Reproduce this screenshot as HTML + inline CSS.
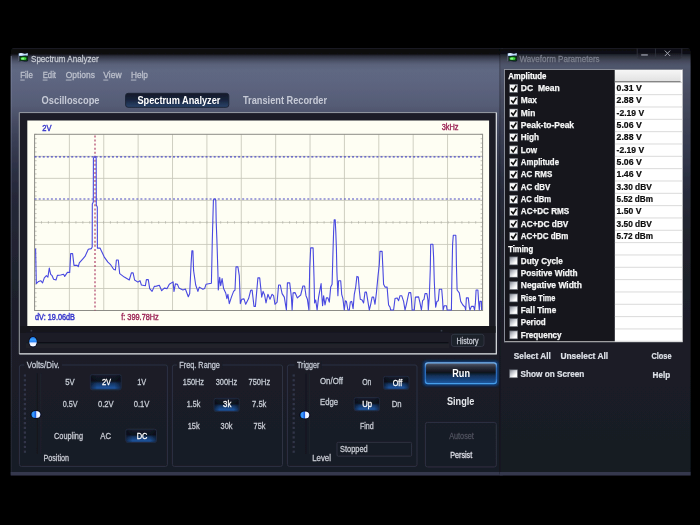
<!DOCTYPE html>
<html lang="en"><head><meta charset="utf-8"><title>Spectrum Analyzer</title>
<style>
html,body{margin:0;padding:0;background:#000;overflow:hidden}
svg{display:block}
text{font-family:'Liberation Sans',sans-serif;white-space:pre}
</style></head><body>
<svg width="700" height="525" viewBox="0 0 700 525">
<defs>
<linearGradient id="gWin" gradientUnits="userSpaceOnUse" x1="0" y1="48" x2="0" y2="475">
<stop offset="0.0000" stop-color="#44465a"/>
<stop offset="0.0021" stop-color="#07080b"/>
<stop offset="0.0141" stop-color="#0b0c12"/>
<stop offset="0.0183" stop-color="#2a2d3a"/>
<stop offset="0.0244" stop-color="#3b4052"/>
<stop offset="0.0304" stop-color="#4c5268"/>
<stop offset="0.0389" stop-color="#5a627a"/>
<stop offset="0.0515" stop-color="#5e6782"/>
<stop offset="0.0796" stop-color="#5d6580"/>
<stop offset="0.1101" stop-color="#59607a"/>
<stop offset="0.1335" stop-color="#555c75"/>
<stop offset="0.1499" stop-color="#4f556d"/>
<stop offset="0.1803" stop-color="#444960"/>
<stop offset="0.2155" stop-color="#3a3f55"/>
<stop offset="0.2857" stop-color="#2c3044"/>
<stop offset="0.3443" stop-color="#252838"/>
<stop offset="0.5902" stop-color="#1c1f2a"/>
<stop offset="1.0000" stop-color="#181b25"/>
</linearGradient>
<linearGradient id="gWin2" gradientUnits="userSpaceOnUse" x1="0" y1="48" x2="0" y2="475">
<stop offset="0.0000" stop-color="#4a4c5a"/>
<stop offset="0.0019" stop-color="#0a0b10"/>
<stop offset="0.0124" stop-color="#0c0d13"/>
<stop offset="0.0159" stop-color="#23252f"/>
<stop offset="0.0218" stop-color="#333642"/>
<stop offset="0.0288" stop-color="#424657"/>
<stop offset="0.0358" stop-color="#4b5065"/>
<stop offset="0.0433" stop-color="#50566c"/>
<stop offset="0.0632" stop-color="#4e546a"/>
<stop offset="0.1148" stop-color="#464b5f"/>
<stop offset="0.1803" stop-color="#3c4155"/>
<stop offset="0.2389" stop-color="#353a4e"/>
<stop offset="0.3091" stop-color="#2a2e40"/>
<stop offset="0.4262" stop-color="#22252f"/>
<stop offset="0.6838" stop-color="#1b1d27"/>
<stop offset="1.0000" stop-color="#181a23"/>
</linearGradient>
<linearGradient id="gSel" x1="0" y1="0" x2="0" y2="1">
<stop offset="0" stop-color="#1d2436"/>
<stop offset="0.12" stop-color="#131827"/>
<stop offset="0.42" stop-color="#0e121d"/>
<stop offset="0.58" stop-color="#153663"/>
<stop offset="0.85" stop-color="#1d5197"/>
<stop offset="1" stop-color="#1a4580"/>
</linearGradient>
<linearGradient id="gSelE" x1="0" y1="0" x2="1" y2="0">
<stop offset="0" stop-color="#080b14" stop-opacity="0.6"/>
<stop offset="0.22" stop-color="#080b14" stop-opacity="0"/>
<stop offset="0.78" stop-color="#080b14" stop-opacity="0"/>
<stop offset="1" stop-color="#080b14" stop-opacity="0.6"/>
</linearGradient>
<linearGradient id="gTab" x1="0" y1="0" x2="0" y2="1">
<stop offset="0" stop-color="#151a29"/>
<stop offset="0.45" stop-color="#18243c"/>
<stop offset="1" stop-color="#2b446c"/>
</linearGradient>
<linearGradient id="gRun" x1="0" y1="0" x2="0" y2="1">
<stop offset="0" stop-color="#566072"/>
<stop offset="0.2" stop-color="#2c313d"/>
<stop offset="0.46" stop-color="#10131c"/>
<stop offset="0.62" stop-color="#123058"/>
<stop offset="1" stop-color="#1d5aa4"/>
</linearGradient>
<linearGradient id="gRunB" x1="0" y1="0" x2="0" y2="1">
<stop offset="0" stop-color="#7ab8f2"/>
<stop offset="0.25" stop-color="#2f6db8"/>
<stop offset="0.75" stop-color="#2b6cbc"/>
<stop offset="1" stop-color="#48a0ec"/>
</linearGradient>
<linearGradient id="gHdr" x1="0" y1="0" x2="0" y2="1">
<stop offset="0" stop-color="#f6f6f6"/>
<stop offset="1" stop-color="#e0e0e0"/>
</linearGradient>
<radialGradient id="gKnob" cx="0.5" cy="0.35" r="0.7">
<stop offset="0" stop-color="#bfe0ff"/>
<stop offset="0.5" stop-color="#2f86f0"/>
<stop offset="1" stop-color="#0a3fb0"/>
</radialGradient>
<linearGradient id="gKnobH" x1="0" y1="0" x2="1" y2="0">
<stop offset="0" stop-color="#1d6fe8"/>
<stop offset="0.2" stop-color="#39a2ff"/>
<stop offset="0.5" stop-color="#1a55e0"/>
<stop offset="0.58" stop-color="#dfe8ff"/>
<stop offset="0.85" stop-color="#ffffff"/>
<stop offset="1" stop-color="#b8ccff"/>
</linearGradient>
<linearGradient id="gKnobV" x1="0" y1="0" x2="0" y2="1">
<stop offset="0" stop-color="#1d6fe8"/>
<stop offset="0.25" stop-color="#39a2ff"/>
<stop offset="0.5" stop-color="#2a80f4"/>
<stop offset="0.62" stop-color="#dfe8ff"/>
<stop offset="0.88" stop-color="#ffffff"/>
<stop offset="1" stop-color="#b8ccff"/>
</linearGradient>
<linearGradient id="gChk" x1="0" y1="0" x2="1" y2="1">
<stop offset="0" stop-color="#7e828c"/>
<stop offset="0.35" stop-color="#c4c7ce"/>
<stop offset="0.7" stop-color="#ffffff"/>
<stop offset="1" stop-color="#ffffff"/>
</linearGradient>
<linearGradient id="gEdge" gradientUnits="userSpaceOnUse" x1="0" y1="56" x2="0" y2="474">
<stop offset="0" stop-color="#8a90aa" stop-opacity="0.5"/>
<stop offset="0.3" stop-color="#6a7088" stop-opacity="0.35"/>
<stop offset="1" stop-color="#3a3e50" stop-opacity="0.3"/>
</linearGradient>
<filter id="soft" x="-5%" y="-5%" width="110%" height="110%"><feGaussianBlur stdDeviation="0.55"/></filter>
<filter id="glow" x="-20%" y="-40%" width="140%" height="180%"><feGaussianBlur stdDeviation="1.3"/></filter>
</defs>
<rect x="0" y="0" width="700" height="525" fill="#000"/>
<g filter="url(#soft)">

<path d="M10.7 475.4 V51.5 Q10.7 48.2 14 48.2 H503 V475.4 Z" fill="url(#gWin)"/>
<rect x="10.7" y="472" width="492" height="3.4" fill="#35384e"/>
<rect x="10.7" y="56" width="1.2" height="418" fill="url(#gEdge)"/>
<g transform="translate(18.1,52.3)"><path d="M0.2 1.2 Q2.6 0 5 0.9 T9.9 0.6 L10 8.6 Q7.5 9.6 5 8.9 T0.4 9.4 Z" fill="#0a1022"/><path d="M0.5 1.3 Q2.6 0.2 5 1.1 T9.7 0.8 L9.7 3.4 Q7 2.8 5 3.4 T0.6 3.6 Z" fill="#a9cdf4"/><path d="M1 1.4 Q2.8 0.6 5 1.4 T9.2 1.1 L9.2 2.1 Q7 1.8 5 2.3 T1 2.5 Z" fill="#eef6ff"/><path d="M1.6 4.3 L9.4 3.9 L9.5 8.1 Q7 8.8 5 8.3 T1.8 8.6 Z" fill="#0b4a12"/><ellipse cx="5.4" cy="6.1" rx="2.9" ry="1.5" fill="#3fd83f"/><ellipse cx="4.6" cy="6.4" rx="1.5" ry="0.9" fill="#8cf58a"/><rect x="0.2" y="3.6" width="1.1" height="5.6" fill="#8a90a0" opacity="0.7"/></g>
<text x="31.0" y="61.6" font-size="9.6" fill="#c8ccd4" stroke="#c8ccd4" stroke-width="0.28" textLength="67.7" lengthAdjust="spacingAndGlyphs">Spectrum Analyzer</text>
<text x="20.3" y="78.4" font-size="9" fill="#bcc0cc" stroke="#bcc0cc" stroke-width="0.28" textLength="12.7" lengthAdjust="spacingAndGlyphs">File</text>
<rect x="20.3" y="79.6" width="4.4" height="0.9" fill="#bcc0cc"/>
<text x="42.7" y="78.4" font-size="9" fill="#bcc0cc" stroke="#bcc0cc" stroke-width="0.28" textLength="13.3" lengthAdjust="spacingAndGlyphs">Edit</text>
<rect x="42.7" y="79.6" width="4.8" height="0.9" fill="#bcc0cc"/>
<text x="65.8" y="78.4" font-size="9" fill="#bcc0cc" stroke="#bcc0cc" stroke-width="0.28" textLength="29.1" lengthAdjust="spacingAndGlyphs">Options</text>
<rect x="65.8" y="79.6" width="5.8" height="0.9" fill="#bcc0cc"/>
<text x="103.3" y="78.4" font-size="9" fill="#bcc0cc" stroke="#bcc0cc" stroke-width="0.28" textLength="18.3" lengthAdjust="spacingAndGlyphs">View</text>
<rect x="103.3" y="79.6" width="5" height="0.9" fill="#bcc0cc"/>
<text x="130.9" y="78.4" font-size="9" fill="#bcc0cc" stroke="#bcc0cc" stroke-width="0.28" textLength="17.1" lengthAdjust="spacingAndGlyphs">Help</text>
<rect x="130.9" y="79.6" width="5.4" height="0.9" fill="#bcc0cc"/>
<rect x="125.6" y="93.3" width="103.2" height="14" rx="2.5" fill="url(#gTab)" stroke="#1a2133" stroke-width="0.9"/>
<text x="41.6" y="104.0" font-size="10.3" fill="#c6cad6" font-weight="bold" textLength="57.9" lengthAdjust="spacingAndGlyphs">Oscilloscope</text>
<text x="137.4" y="104.0" font-size="10.3" fill="#ffffff" font-weight="bold" textLength="83.0" lengthAdjust="spacingAndGlyphs">Spectrum Analyzer</text>
<text x="243.0" y="104.0" font-size="10.3" fill="#c6cad6" font-weight="bold" textLength="84.0" lengthAdjust="spacingAndGlyphs">Transient Recorder</text>
<rect x="19.3" y="112.6" width="477" height="241.3" fill="#1a1c25"/>
<path d="M19.3 353.9 V112.6 H496.3" fill="none" stroke="#9a9ea6" stroke-width="1"/>
<path d="M19.3 353.9 H496.3 V112.6" fill="none" stroke="#e4e6ea" stroke-width="1.2"/>
<rect x="27.3" y="120.5" width="461.8" height="205.5" fill="#fefef3"/>
<path d="M69.38 134.3 V310.5 M103.76 134.3 V310.5 M138.14 134.3 V310.5 M172.52 134.3 V310.5 M206.90 134.3 V310.5 M241.28 134.3 V310.5 M275.66 134.3 V310.5 M310.04 134.3 V310.5 M344.42 134.3 V310.5 M378.80 134.3 V310.5 M413.18 134.3 V310.5 M447.56 134.3 V310.5 M34.6 156.33 H482.6 M34.6 178.35 H482.6 M34.6 200.38 H482.6 M34.6 222.40 H482.6 M34.6 244.43 H482.6 M34.6 266.45 H482.6 M34.6 288.48 H482.6" stroke="#c6c6b8" stroke-width="0.85" fill="none"/>
<path d="M34.60 221.20 v2.4 M41.49 221.20 v2.4 M48.38 221.20 v2.4 M55.28 221.20 v2.4 M62.17 221.20 v2.4 M69.06 221.20 v2.4 M75.95 221.20 v2.4 M82.85 221.20 v2.4 M89.74 221.20 v2.4 M96.63 221.20 v2.4 M103.52 221.20 v2.4 M110.42 221.20 v2.4 M117.31 221.20 v2.4 M124.20 221.20 v2.4 M131.09 221.20 v2.4 M137.98 221.20 v2.4 M144.88 221.20 v2.4 M151.77 221.20 v2.4 M158.66 221.20 v2.4 M165.55 221.20 v2.4 M172.45 221.20 v2.4 M179.34 221.20 v2.4 M186.23 221.20 v2.4 M193.12 221.20 v2.4 M200.02 221.20 v2.4 M206.91 221.20 v2.4 M213.80 221.20 v2.4 M220.69 221.20 v2.4 M227.58 221.20 v2.4 M234.48 221.20 v2.4 M241.37 221.20 v2.4 M248.26 221.20 v2.4 M255.15 221.20 v2.4 M262.05 221.20 v2.4 M268.94 221.20 v2.4 M275.83 221.20 v2.4 M282.72 221.20 v2.4 M289.62 221.20 v2.4 M296.51 221.20 v2.4 M303.40 221.20 v2.4 M310.29 221.20 v2.4 M317.18 221.20 v2.4 M324.08 221.20 v2.4 M330.97 221.20 v2.4 M337.86 221.20 v2.4 M344.75 221.20 v2.4 M351.65 221.20 v2.4 M358.54 221.20 v2.4 M365.43 221.20 v2.4 M372.32 221.20 v2.4 M379.22 221.20 v2.4 M386.11 221.20 v2.4 M393.00 221.20 v2.4 M399.89 221.20 v2.4 M406.78 221.20 v2.4 M413.68 221.20 v2.4 M420.57 221.20 v2.4 M427.46 221.20 v2.4 M434.35 221.20 v2.4 M441.25 221.20 v2.4 M448.14 221.20 v2.4 M455.03 221.20 v2.4 M461.92 221.20 v2.4 M468.82 221.20 v2.4 M475.71 221.20 v2.4 M482.60 221.20 v2.4 M34.6 134.30 h2 M482.6 134.30 h-2 M34.6 138.71 h2 M482.6 138.71 h-2 M34.6 143.11 h2 M482.6 143.11 h-2 M34.6 147.52 h2 M482.6 147.52 h-2 M34.6 151.92 h2 M482.6 151.92 h-2 M34.6 156.33 h2 M482.6 156.33 h-2 M34.6 160.73 h2 M482.6 160.73 h-2 M34.6 165.14 h2 M482.6 165.14 h-2 M34.6 169.54 h2 M482.6 169.54 h-2 M34.6 173.94 h2 M482.6 173.94 h-2 M34.6 178.35 h2 M482.6 178.35 h-2 M34.6 182.75 h2 M482.6 182.75 h-2 M34.6 187.16 h2 M482.6 187.16 h-2 M34.6 191.56 h2 M482.6 191.56 h-2 M34.6 195.97 h2 M482.6 195.97 h-2 M34.6 200.38 h2 M482.6 200.38 h-2 M34.6 204.78 h2 M482.6 204.78 h-2 M34.6 209.19 h2 M482.6 209.19 h-2 M34.6 213.59 h2 M482.6 213.59 h-2 M34.6 218.00 h2 M482.6 218.00 h-2 M34.6 222.40 h2 M482.6 222.40 h-2 M34.6 226.81 h2 M482.6 226.81 h-2 M34.6 231.21 h2 M482.6 231.21 h-2 M34.6 235.62 h2 M482.6 235.62 h-2 M34.6 240.02 h2 M482.6 240.02 h-2 M34.6 244.43 h2 M482.6 244.43 h-2 M34.6 248.83 h2 M482.6 248.83 h-2 M34.6 253.24 h2 M482.6 253.24 h-2 M34.6 257.64 h2 M482.6 257.64 h-2 M34.6 262.04 h2 M482.6 262.04 h-2 M34.6 266.45 h2 M482.6 266.45 h-2 M34.6 270.86 h2 M482.6 270.86 h-2 M34.6 275.26 h2 M482.6 275.26 h-2 M34.6 279.66 h2 M482.6 279.66 h-2 M34.6 284.07 h2 M482.6 284.07 h-2 M34.6 288.48 h2 M482.6 288.48 h-2 M34.6 292.88 h2 M482.6 292.88 h-2 M34.6 297.28 h2 M482.6 297.28 h-2 M34.6 301.69 h2 M482.6 301.69 h-2 M34.6 306.10 h2 M482.6 306.10 h-2 M34.6 310.50 h2 M482.6 310.50 h-2" stroke="#b4b4aa" stroke-width="0.8" fill="none"/>
<rect x="34.6" y="134.3" width="448.0" height="176.2" fill="none" stroke="#8c8c86" stroke-width="1"/>
<path d="M34.6 156.8 H482.6 M34.6 199 H482.6" stroke="#4a4ac4" stroke-width="1.2" stroke-dasharray="2 2.07" fill="none"/>
<path d="M95 135.5 V310.5" stroke="#a8305c" stroke-width="1.1" stroke-dasharray="2 2.05" fill="none"/>
<path d="M35.6 248.6 L36.3 283.6 L38.6 281.4 L40.7 280.7 L42.6 282.9 L44.3 277.9 L46.4 275.7 L47.9 277.1 L49.3 268.1 L50.7 274.3 L52.1 275.7 L53.6 279.3 L56.0 280.0 L57.4 275.4 L60.7 275.0 L63.6 274.3 L64.7 276.4 L67.4 272.4 L69.7 272.4 L70.7 253.6 L72.6 253.6 L74.0 265.4 L77.1 265.4 L78.3 266.7 L79.3 262.9 L83.1 258.6 L85.0 256.4 L88.3 249.3 L91.4 248.6 L92.2 247.0 L92.3 204.0 L93.3 202.0 L93.4 158.5 L94.2 156.9 L95.6 156.9 L96.2 158.5 L96.3 205.0 L97.3 207.0 L97.4 248.1 L100.0 248.1 L104.3 257.1 L107.9 262.1 L110.3 264.3 L113.6 269.3 L115.4 270.0 L116.4 260.0 L118.3 260.0 L119.7 273.6 L124.3 277.1 L129.3 280.0 L131.4 272.9 L133.1 272.9 L134.6 280.0 L137.9 282.1 L140.0 280.7 L141.4 285.0 L145.4 285.7 L146.4 279.6 L148.3 279.6 L149.7 288.6 L152.1 291.4 L154.3 286.4 L156.4 286.1 L159.3 285.3 L161.7 290.7 L164.3 288.1 L167.1 288.6 L169.3 284.3 L173.1 281.9 L174.0 291.4 L175.4 283.9 L177.4 284.3 L178.9 287.9 L182.9 290.0 L185.4 289.0 L188.3 296.7 L189.7 293.6 L191.1 263.6 L191.9 250.7 L192.9 250.7 L193.6 270.7 L195.7 285.0 L197.9 291.4 L199.3 287.1 L202.9 289.3 L204.6 288.6 L206.0 284.3 L211.4 283.3 L211.8 265.0 L212.3 240.0 L212.8 222.0 L213.4 200.5 L213.9 199.0 L215.3 199.0 L215.8 200.5 L216.2 222.0 L216.9 240.0 L217.4 256.0 L217.9 272.0 L218.3 290.0 L219.7 277.4 L220.7 285.7 L222.1 278.6 L223.6 288.6 L225.7 292.9 L226.9 298.6 L227.9 294.3 L229.3 303.6 L231.4 297.1 L233.6 291.4 L235.0 290.0 L236.0 266.9 L237.9 266.9 L239.3 275.7 L240.3 303.6 L241.7 299.3 L244.0 298.9 L245.7 304.3 L248.6 298.6 L250.7 290.3 L252.1 290.0 L254.0 306.4 L255.4 306.4 L257.9 277.9 L259.7 277.9 L261.7 297.1 L263.1 291.4 L264.6 295.0 L266.0 302.9 L267.9 294.3 L270.0 299.3 L272.1 294.3 L273.6 295.7 L275.0 304.3 L277.1 302.1 L278.6 285.0 L280.3 285.0 L282.1 293.6 L284.3 297.1 L286.4 310.0 L287.4 282.9 L289.7 282.9 L291.4 297.1 L292.1 310.0 L293.1 292.9 L295.0 292.6 L297.4 297.9 L300.7 295.0 L302.9 286.0 L304.6 286.0 L306.0 295.7 L307.4 299.3 L308.9 310.0 L309.7 268.6 L310.7 247.9 L313.1 247.9 L314.0 277.1 L314.6 302.9 L315.7 300.0 L317.1 310.0 L318.6 297.1 L321.1 283.6 L321.7 294.3 L322.6 305.7 L323.6 295.7 L325.0 305.0 L326.4 297.9 L327.9 297.9 L329.3 302.1 L330.7 287.1 L332.1 284.3 L332.9 254.3 L333.6 232.0 L334.2 219.9 L335.2 219.9 L335.8 232.0 L336.4 248.6 L336.9 271.4 L337.9 295.7 L338.6 280.7 L340.7 280.7 L341.7 294.3 L342.9 298.6 L344.3 310.0 L345.4 300.7 L346.4 301.4 L347.9 310.0 L349.3 310.0 L350.3 302.1 L351.7 301.4 L353.1 308.6 L354.3 294.3 L355.7 287.1 L356.9 276.4 L358.3 277.1 L359.3 290.0 L360.3 299.3 L362.1 300.0 L363.6 302.9 L365.0 292.1 L366.4 292.1 L367.9 301.4 L369.3 310.0 L370.7 304.3 L372.1 297.1 L373.6 297.1 L375.0 304.3 L376.4 292.9 L377.9 277.1 L379.3 264.3 L380.0 251.4 L382.1 251.4 L382.9 268.6 L383.6 284.3 L385.0 287.1 L387.1 287.1 L387.9 297.1 L388.6 305.0 L390.0 307.1 L390.7 310.0 L393.6 310.0 L395.0 298.6 L397.1 297.9 L398.6 300.7 L400.0 295.7 L401.7 295.7 L403.6 301.4 L405.0 310.0 L406.4 304.3 L407.9 297.1 L408.9 292.6 L410.7 292.6 L411.4 298.6 L412.1 310.0 L414.3 310.0 L415.4 297.1 L418.6 296.9 L420.0 302.9 L421.4 310.0 L422.6 300.7 L424.0 299.3 L425.0 293.6 L426.9 293.6 L427.9 300.0 L428.3 310.0 L429.3 297.1 L430.3 268.6 L430.7 244.3 L432.9 244.3 L433.6 257.1 L434.3 281.4 L435.0 297.1 L435.7 307.1 L436.9 301.4 L438.3 300.7 L439.3 289.3 L441.7 289.3 L442.6 300.0 L443.1 310.0 L444.3 305.7 L446.4 305.7 L447.1 310.0 L451.4 310.0 L451.9 277.1 L452.6 244.3 L453.3 235.2 L455.8 235.2 L456.1 244.0 L456.4 264.3 L457.1 290.0 L459.3 292.9 L460.7 301.4 L462.9 305.0 L465.0 307.1 L465.7 310.0 L466.4 297.9 L468.3 297.9 L469.3 307.1 L470.0 310.0 L471.4 306.4 L473.6 306.4 L474.6 310.0 L475.4 302.9 L476.1 290.0 L477.9 290.0 L478.6 301.4 L479.3 310.0 L480.0 301.4 L481.4 301.4 L481.6 310.0" fill="none" stroke="#4848e0" stroke-width="1.1" stroke-linejoin="round"/>
<text x="42.3" y="130.6" font-size="9" fill="#3636cc" stroke="#3636cc" stroke-width="0.45" textLength="9.2" lengthAdjust="spacingAndGlyphs">2V</text>
<text x="441.7" y="130.4" font-size="9" fill="#9c2456" stroke="#9c2456" stroke-width="0.4" textLength="16.9" lengthAdjust="spacingAndGlyphs">3kHz</text>
<text x="35.0" y="320.1" font-size="9" fill="#3636cc" stroke="#3636cc" stroke-width="0.45" textLength="40.0" lengthAdjust="spacingAndGlyphs">dV: 19.06dB</text>
<text x="121.2" y="320.1" font-size="9" fill="#9c2456" stroke="#9c2456" stroke-width="0.4" textLength="37.6" lengthAdjust="spacingAndGlyphs">f: 399.78Hz</text>
<rect x="20" y="326.2" width="475.6" height="6.6" fill="#14161d"/>
<rect x="26" y="332.8" width="423" height="9.4" fill="#1d1f28"/>
<rect x="26" y="343.2" width="423" height="5.2" fill="#20222c"/>
<path d="M30 342.7 H448.5" stroke="#0a0b10" stroke-width="1.1"/>
<circle cx="31.4" cy="330.7" r="0.9" fill="#3a3e4c"/><circle cx="441.5" cy="330.7" r="0.9" fill="#3a3e4c"/>
<ellipse cx="33" cy="341.8" rx="4.6" ry="5.6" fill="#070a1c"/>
<ellipse cx="33" cy="341.8" rx="3.8" ry="4.8" fill="url(#gKnobV)"/>
<rect x="451.4" y="334.3" width="32.6" height="12.2" rx="2.5" fill="#1d202a" stroke="#343846" stroke-width="0.9"/>
<text x="456.4" y="343.5" font-size="9" fill="#c8ccd4" stroke="#c8ccd4" stroke-width="0.28" textLength="22.2" lengthAdjust="spacingAndGlyphs">History</text>
<rect x="19.4" y="365.0" width="148.0" height="101.4" rx="2" fill="none" stroke="#2e3242" stroke-width="1"/>
<rect x="24.3" y="361.0" width="37.7" height="8" fill="#1a1d28"/>
<text x="26.8" y="367.9" font-size="9" fill="#c4c8d2" stroke="#c4c8d2" stroke-width="0.28" textLength="32.7" lengthAdjust="spacingAndGlyphs">Volts/Div.</text>
<rect x="172.4" y="365.0" width="110.1" height="101.4" rx="2" fill="none" stroke="#2e3242" stroke-width="1"/>
<rect x="176.8" y="361.0" width="45.6" height="8" fill="#1a1d28"/>
<text x="179.3" y="367.9" font-size="9" fill="#c4c8d2" stroke="#c4c8d2" stroke-width="0.28" textLength="40.6" lengthAdjust="spacingAndGlyphs">Freq. Range</text>
<rect x="287.4" y="365.0" width="129.6" height="101.4" rx="2" fill="none" stroke="#2e3242" stroke-width="1"/>
<rect x="294.5" y="361.0" width="27.4" height="8" fill="#1a1d28"/>
<text x="297.0" y="367.9" font-size="9" fill="#c4c8d2" stroke="#c4c8d2" stroke-width="0.28" textLength="22.4" lengthAdjust="spacingAndGlyphs">Trigger</text>
<rect x="425.4" y="422.4" width="70.9" height="44.5" rx="2" fill="none" stroke="#2e3242" stroke-width="1"/>
<rect x="23.8" y="374.4" width="2.2" height="2.2" fill="#32364a"/><rect x="23.8" y="379.2" width="2.2" height="2.2" fill="#32364a"/><rect x="23.8" y="383.9" width="2.2" height="2.2" fill="#32364a"/><rect x="23.8" y="388.7" width="2.2" height="2.2" fill="#32364a"/><rect x="23.8" y="393.4" width="2.2" height="2.2" fill="#32364a"/><rect x="23.8" y="398.2" width="2.2" height="2.2" fill="#32364a"/><rect x="23.8" y="403.0" width="2.2" height="2.2" fill="#32364a"/><rect x="23.8" y="407.7" width="2.2" height="2.2" fill="#32364a"/><rect x="23.8" y="412.5" width="2.2" height="2.2" fill="#32364a"/><rect x="23.8" y="417.2" width="2.2" height="2.2" fill="#32364a"/><rect x="23.8" y="422.0" width="2.2" height="2.2" fill="#32364a"/><rect x="23.8" y="426.8" width="2.2" height="2.2" fill="#32364a"/><rect x="23.8" y="431.5" width="2.2" height="2.2" fill="#32364a"/><rect x="23.8" y="436.3" width="2.2" height="2.2" fill="#32364a"/><rect x="23.8" y="441.0" width="2.2" height="2.2" fill="#32364a"/><rect x="23.8" y="445.8" width="2.2" height="2.2" fill="#32364a"/><rect x="23.8" y="450.6" width="2.2" height="2.2" fill="#32364a"/>
<path d="M37.3 373.5 V454" stroke="#12141c" stroke-width="1.1"/>
<path d="M40.9 373.5 V454" stroke="#20232e" stroke-width="0.8"/>
<ellipse cx="35.9" cy="414.5" rx="5.6" ry="4.3" fill="#070a1c"/>
<ellipse cx="35.9" cy="414.5" rx="4.5" ry="3.5" fill="url(#gKnobH)"/>
<rect x="90.3" y="374.6" width="30.9" height="15.2" rx="2" fill="url(#gSel)"/>
<rect x="90.3" y="374.6" width="30.9" height="15.2" rx="2" fill="url(#gSelE)" stroke="#222b40" stroke-width="0.9"/>
<text x="65.2" y="385.4" font-size="9" fill="#c8ccd4" stroke="#c8ccd4" stroke-width="0.28" textLength="9.4" lengthAdjust="spacingAndGlyphs">5V</text>
<text x="101.9" y="385.4" font-size="9" fill="#ffffff" stroke="#ffffff" stroke-width="0.28" textLength="9.2" lengthAdjust="spacingAndGlyphs">2V</text>
<text x="137.2" y="385.4" font-size="9" fill="#c8ccd4" stroke="#c8ccd4" stroke-width="0.28" textLength="9.0" lengthAdjust="spacingAndGlyphs">1V</text>
<text x="62.7" y="407.4" font-size="9" fill="#c8ccd4" stroke="#c8ccd4" stroke-width="0.28" textLength="14.9" lengthAdjust="spacingAndGlyphs">0.5V</text>
<text x="98.0" y="407.4" font-size="9" fill="#c8ccd4" stroke="#c8ccd4" stroke-width="0.28" textLength="15.7" lengthAdjust="spacingAndGlyphs">0.2V</text>
<text x="133.7" y="407.4" font-size="9" fill="#c8ccd4" stroke="#c8ccd4" stroke-width="0.28" textLength="15.7" lengthAdjust="spacingAndGlyphs">0.1V</text>
<rect x="125.8" y="429.2" width="30.7" height="13.2" rx="2" fill="url(#gSel)"/>
<rect x="125.8" y="429.2" width="30.7" height="13.2" rx="2" fill="url(#gSelE)" stroke="#222b40" stroke-width="0.9"/>
<text x="54.0" y="439.4" font-size="9" fill="#c8ccd4" stroke="#c8ccd4" stroke-width="0.28" textLength="29.0" lengthAdjust="spacingAndGlyphs">Coupling</text>
<text x="100.3" y="439.2" font-size="9" fill="#c8ccd4" stroke="#c8ccd4" stroke-width="0.28" textLength="10.7" lengthAdjust="spacingAndGlyphs">AC</text>
<text x="136.7" y="439.2" font-size="9" fill="#ffffff" stroke="#ffffff" stroke-width="0.28" textLength="10.7" lengthAdjust="spacingAndGlyphs">DC</text>
<text x="43.4" y="460.9" font-size="9" fill="#c8ccd4" stroke="#c8ccd4" stroke-width="0.28" textLength="25.6" lengthAdjust="spacingAndGlyphs">Position</text>
<rect x="214" y="398.3" width="25.2" height="13.1" rx="2" fill="url(#gSel)"/>
<rect x="214" y="398.3" width="25.2" height="13.1" rx="2" fill="url(#gSelE)" stroke="#222b40" stroke-width="0.9"/>
<text x="182.8" y="385.4" font-size="9" fill="#c8ccd4" stroke="#c8ccd4" stroke-width="0.28" textLength="21.2" lengthAdjust="spacingAndGlyphs">150Hz</text>
<text x="215.7" y="385.4" font-size="9" fill="#c8ccd4" stroke="#c8ccd4" stroke-width="0.28" textLength="21.5" lengthAdjust="spacingAndGlyphs">300Hz</text>
<text x="248.6" y="385.4" font-size="9" fill="#c8ccd4" stroke="#c8ccd4" stroke-width="0.28" textLength="21.5" lengthAdjust="spacingAndGlyphs">750Hz</text>
<text x="186.7" y="407.4" font-size="9" fill="#c8ccd4" stroke="#c8ccd4" stroke-width="0.28" textLength="13.6" lengthAdjust="spacingAndGlyphs">1.5k</text>
<text x="223.1" y="407.4" font-size="9" fill="#ffffff" stroke="#ffffff" stroke-width="0.28" textLength="8.2" lengthAdjust="spacingAndGlyphs">3k</text>
<text x="252.1" y="407.4" font-size="9" fill="#c8ccd4" stroke="#c8ccd4" stroke-width="0.28" textLength="14.3" lengthAdjust="spacingAndGlyphs">7.5k</text>
<text x="187.7" y="429.1" font-size="9" fill="#c8ccd4" stroke="#c8ccd4" stroke-width="0.28" textLength="11.9" lengthAdjust="spacingAndGlyphs">15k</text>
<text x="220.6" y="429.1" font-size="9" fill="#c8ccd4" stroke="#c8ccd4" stroke-width="0.28" textLength="11.9" lengthAdjust="spacingAndGlyphs">30k</text>
<text x="253.6" y="429.1" font-size="9" fill="#c8ccd4" stroke="#c8ccd4" stroke-width="0.28" textLength="11.8" lengthAdjust="spacingAndGlyphs">75k</text>
<rect x="292.6" y="374.4" width="2.2" height="2.2" fill="#32364a"/><rect x="292.6" y="379.2" width="2.2" height="2.2" fill="#32364a"/><rect x="292.6" y="383.9" width="2.2" height="2.2" fill="#32364a"/><rect x="292.6" y="388.7" width="2.2" height="2.2" fill="#32364a"/><rect x="292.6" y="393.4" width="2.2" height="2.2" fill="#32364a"/><rect x="292.6" y="398.2" width="2.2" height="2.2" fill="#32364a"/><rect x="292.6" y="403.0" width="2.2" height="2.2" fill="#32364a"/><rect x="292.6" y="407.7" width="2.2" height="2.2" fill="#32364a"/><rect x="292.6" y="412.5" width="2.2" height="2.2" fill="#32364a"/><rect x="292.6" y="417.2" width="2.2" height="2.2" fill="#32364a"/><rect x="292.6" y="422.0" width="2.2" height="2.2" fill="#32364a"/><rect x="292.6" y="426.8" width="2.2" height="2.2" fill="#32364a"/><rect x="292.6" y="431.5" width="2.2" height="2.2" fill="#32364a"/><rect x="292.6" y="436.3" width="2.2" height="2.2" fill="#32364a"/><rect x="292.6" y="441.0" width="2.2" height="2.2" fill="#32364a"/><rect x="292.6" y="445.8" width="2.2" height="2.2" fill="#32364a"/><rect x="292.6" y="450.6" width="2.2" height="2.2" fill="#32364a"/>
<path d="M306 373.5 V454" stroke="#12141c" stroke-width="1.1"/>
<path d="M309.6 373.5 V454" stroke="#20232e" stroke-width="0.8"/>
<ellipse cx="304.8" cy="414.9" rx="5.6" ry="4.3" fill="#070a1c"/>
<ellipse cx="304.8" cy="414.9" rx="4.5" ry="3.5" fill="url(#gKnobH)"/>
<rect x="383.5" y="376.3" width="25.5" height="13.1" rx="2" fill="url(#gSel)"/>
<rect x="383.5" y="376.3" width="25.5" height="13.1" rx="2" fill="url(#gSelE)" stroke="#222b40" stroke-width="0.9"/>
<rect x="354.2" y="397.6" width="25.4" height="13.2" rx="2" fill="url(#gSel)"/>
<rect x="354.2" y="397.6" width="25.4" height="13.2" rx="2" fill="url(#gSelE)" stroke="#222b40" stroke-width="0.9"/>
<text x="320.0" y="383.8" font-size="9" fill="#c8ccd4" stroke="#c8ccd4" stroke-width="0.28" textLength="23.0" lengthAdjust="spacingAndGlyphs">On/Off</text>
<text x="362.2" y="385.2" font-size="9" fill="#c8ccd4" stroke="#c8ccd4" stroke-width="0.28" textLength="9.2" lengthAdjust="spacingAndGlyphs">On</text>
<text x="392.7" y="385.7" font-size="9" fill="#ffffff" stroke="#ffffff" stroke-width="0.28" textLength="9.5" lengthAdjust="spacingAndGlyphs">Off</text>
<text x="320.0" y="405.0" font-size="9" fill="#c8ccd4" stroke="#c8ccd4" stroke-width="0.28" textLength="18.0" lengthAdjust="spacingAndGlyphs">Edge</text>
<text x="362.2" y="407.3" font-size="9" fill="#ffffff" stroke="#ffffff" stroke-width="0.28" textLength="9.8" lengthAdjust="spacingAndGlyphs">Up</text>
<text x="391.7" y="406.9" font-size="9" fill="#c8ccd4" stroke="#c8ccd4" stroke-width="0.28" textLength="9.9" lengthAdjust="spacingAndGlyphs">Dn</text>
<text x="359.9" y="429.4" font-size="9" fill="#c8ccd4" stroke="#c8ccd4" stroke-width="0.28" textLength="13.8" lengthAdjust="spacingAndGlyphs">Find</text>
<text x="312.2" y="461.0" font-size="9" fill="#c8ccd4" stroke="#c8ccd4" stroke-width="0.28" textLength="18.8" lengthAdjust="spacingAndGlyphs">Level</text>
<rect x="337" y="442.3" width="74.6" height="13.9" rx="1.2" fill="#191c25" stroke="#323645" stroke-width="0.9"/>
<text x="340.1" y="452.2" font-size="9" fill="#c8ccd4" stroke="#c8ccd4" stroke-width="0.28" textLength="27.6" lengthAdjust="spacingAndGlyphs">Stopped</text>
<rect x="423" y="360.8" width="75.8" height="25.2" rx="4" fill="#114488" opacity="0.85" filter="url(#glow)"/>
<rect x="425.4" y="362.9" width="71" height="20.8" rx="2.6" fill="url(#gRun)" stroke="url(#gRunB)" stroke-width="1.3"/>
<text x="452.3" y="377.0" font-size="10.3" fill="#ffffff" font-weight="bold" textLength="17.7" lengthAdjust="spacingAndGlyphs">Run</text>
<text x="446.9" y="404.7" font-size="10.3" fill="#e4e6ea" font-weight="bold" textLength="27.5" lengthAdjust="spacingAndGlyphs">Single</text>
<text x="449.2" y="439.2" font-size="9" fill="#4e525e" stroke="#4e525e" stroke-width="0.28" textLength="24.7" lengthAdjust="spacingAndGlyphs">Autoset</text>
<text x="450.2" y="458.2" font-size="9" fill="#dde0e8" stroke="#dde0e8" stroke-width="0.28" textLength="22.0" lengthAdjust="spacingAndGlyphs">Persist</text>
<path d="M499.8 475.4 V51.5 Q499.8 48.2 503 48.2 H687.3 Q690.6 48.2 690.6 51.5 V475.4 Z" fill="url(#gWin2)"/>
<rect x="499.3" y="49" width="1" height="425" fill="#000" opacity="0.28"/>
<rect x="499.8" y="472" width="190.8" height="3.4" fill="#35384e"/>
<g transform="translate(507.1,52.3)"><path d="M0.2 1.2 Q2.6 0 5 0.9 T9.9 0.6 L10 8.6 Q7.5 9.6 5 8.9 T0.4 9.4 Z" fill="#0a1022"/><path d="M0.5 1.3 Q2.6 0.2 5 1.1 T9.7 0.8 L9.7 3.4 Q7 2.8 5 3.4 T0.6 3.6 Z" fill="#a9cdf4"/><path d="M1 1.4 Q2.8 0.6 5 1.4 T9.2 1.1 L9.2 2.1 Q7 1.8 5 2.3 T1 2.5 Z" fill="#eef6ff"/><path d="M1.6 4.3 L9.4 3.9 L9.5 8.1 Q7 8.8 5 8.3 T1.8 8.6 Z" fill="#0b4a12"/><ellipse cx="5.4" cy="6.1" rx="2.9" ry="1.5" fill="#3fd83f"/><ellipse cx="4.6" cy="6.4" rx="1.5" ry="0.9" fill="#8cf58a"/><rect x="0.2" y="3.6" width="1.1" height="5.6" fill="#8a90a0" opacity="0.7"/></g>
<text x="519.6" y="61.6" font-size="9.6" fill="#7c808e" stroke="#7c808e" stroke-width="0.28" textLength="80.0" lengthAdjust="spacingAndGlyphs">Waveform Parameters</text>
<path d="M637.2 48.6 V56 Q637.2 58.9 640.2 58.9 H678.8 Q681.8 58.9 681.8 56 V48.6" fill="#1d1f27" fill-opacity="0.2" stroke="#343742" stroke-width="0.8"/>
<path d="M655.5 48.6 V58.9" stroke="#30333e" stroke-width="0.8"/>
<rect x="641.2" y="54.3" width="6.6" height="1.3" fill="#989ca8"/>
<path d="M664.8 50.6 L670.2 56 M670.2 50.6 L664.8 56" stroke="#a4a8b4" stroke-width="1"/>
<rect x="504.1" y="69.1" width="178.7" height="273.1" fill="#dadada"/>
<path d="M504.55 342.2 V69.55 H682.8" stroke="#7c808c" stroke-width="0.9" fill="none"/>
<rect x="505" y="70.0" width="109.9" height="271.3" fill="#17191f"/>
<rect x="614.9" y="70.0" width="67.1" height="271.3" fill="#ffffff"/>
<rect x="614.9" y="70.0" width="67.1" height="12.3" fill="url(#gHdr)"/>
<rect x="614.9" y="81.1" width="65.9" height="1.4" fill="#6c6c6c"/>
<rect x="680.7" y="70.0" width="1.3" height="12.3" fill="#ffffff"/>
<path d="M614.9 82.33 H682 M614.9 94.66 H682 M614.9 106.99 H682 M614.9 119.32 H682 M614.9 131.65 H682 M614.9 143.98 H682 M614.9 156.31 H682 M614.9 168.64 H682 M614.9 180.97 H682 M614.9 193.30 H682 M614.9 205.63 H682 M614.9 217.96 H682 M614.9 230.29 H682 M614.9 242.62 H682 M614.9 254.95 H682 M614.9 267.28 H682 M614.9 279.61 H682 M614.9 291.94 H682 M614.9 304.27 H682 M614.9 316.60 H682 M614.9 328.93 H682 M614.9 341.26 H682" stroke="#d6d6d6" stroke-width="0.9" fill="none"/>
<text x="508.2" y="79.2" font-size="8.7" fill="#ffffff" font-weight="bold" stroke="#ffffff" stroke-width="0.25" textLength="38.3" lengthAdjust="spacingAndGlyphs">Amplitude</text>
<rect x="509.7" y="84.3" width="8" height="8" fill="#f8f8f8" stroke="#6a6e78" stroke-width="0.6"/>
<path d="M511.2 87.9 l2.0 2.5 l3.2 -4.9" stroke="#0c0c0c" stroke-width="1.6" fill="none"/>
<text x="520.8" y="91.1" font-size="8.7" fill="#f6f6f6" font-weight="bold" stroke="#f6f6f6" stroke-width="0.25" textLength="39.0" lengthAdjust="spacingAndGlyphs">DC  Mean</text>
<text x="616.6" y="91.1" font-size="8.7" fill="#0c0c0c" font-weight="bold" stroke="#0c0c0c" stroke-width="0.2" textLength="25.2" lengthAdjust="spacingAndGlyphs">0.31 V</text>
<rect x="509.7" y="96.6" width="8" height="8" fill="#f8f8f8" stroke="#6a6e78" stroke-width="0.6"/>
<path d="M511.2 100.2 l2.0 2.5 l3.2 -4.9" stroke="#0c0c0c" stroke-width="1.6" fill="none"/>
<text x="520.8" y="103.4" font-size="8.7" fill="#f6f6f6" font-weight="bold" stroke="#f6f6f6" stroke-width="0.25" textLength="16.2" lengthAdjust="spacingAndGlyphs">Max</text>
<text x="616.6" y="103.4" font-size="8.7" fill="#0c0c0c" font-weight="bold" stroke="#0c0c0c" stroke-width="0.2" textLength="25.2" lengthAdjust="spacingAndGlyphs">2.88 V</text>
<rect x="509.7" y="109.0" width="8" height="8" fill="#f8f8f8" stroke="#6a6e78" stroke-width="0.6"/>
<path d="M511.2 112.6 l2.0 2.5 l3.2 -4.9" stroke="#0c0c0c" stroke-width="1.6" fill="none"/>
<text x="520.8" y="115.8" font-size="8.7" fill="#f6f6f6" font-weight="bold" stroke="#f6f6f6" stroke-width="0.25" textLength="14.5" lengthAdjust="spacingAndGlyphs">Min</text>
<text x="616.6" y="115.8" font-size="8.7" fill="#0c0c0c" font-weight="bold" stroke="#0c0c0c" stroke-width="0.2" textLength="27.5" lengthAdjust="spacingAndGlyphs">-2.19 V</text>
<rect x="509.7" y="121.3" width="8" height="8" fill="#f8f8f8" stroke="#6a6e78" stroke-width="0.6"/>
<path d="M511.2 124.9 l2.0 2.5 l3.2 -4.9" stroke="#0c0c0c" stroke-width="1.6" fill="none"/>
<text x="520.8" y="128.1" font-size="8.7" fill="#f6f6f6" font-weight="bold" stroke="#f6f6f6" stroke-width="0.25" textLength="53.3" lengthAdjust="spacingAndGlyphs">Peak-to-Peak</text>
<text x="616.6" y="128.1" font-size="8.7" fill="#0c0c0c" font-weight="bold" stroke="#0c0c0c" stroke-width="0.2" textLength="25.2" lengthAdjust="spacingAndGlyphs">5.06 V</text>
<rect x="509.7" y="133.6" width="8" height="8" fill="#f8f8f8" stroke="#6a6e78" stroke-width="0.6"/>
<path d="M511.2 137.2 l2.0 2.5 l3.2 -4.9" stroke="#0c0c0c" stroke-width="1.6" fill="none"/>
<text x="520.8" y="140.4" font-size="8.7" fill="#f6f6f6" font-weight="bold" stroke="#f6f6f6" stroke-width="0.25" textLength="18.2" lengthAdjust="spacingAndGlyphs">High</text>
<text x="616.6" y="140.4" font-size="8.7" fill="#0c0c0c" font-weight="bold" stroke="#0c0c0c" stroke-width="0.2" textLength="25.2" lengthAdjust="spacingAndGlyphs">2.88 V</text>
<rect x="509.7" y="145.9" width="8" height="8" fill="#f8f8f8" stroke="#6a6e78" stroke-width="0.6"/>
<path d="M511.2 149.5 l2.0 2.5 l3.2 -4.9" stroke="#0c0c0c" stroke-width="1.6" fill="none"/>
<text x="520.8" y="152.8" font-size="8.7" fill="#f6f6f6" font-weight="bold" stroke="#f6f6f6" stroke-width="0.25" textLength="16.2" lengthAdjust="spacingAndGlyphs">Low</text>
<text x="616.6" y="152.8" font-size="8.7" fill="#0c0c0c" font-weight="bold" stroke="#0c0c0c" stroke-width="0.2" textLength="27.5" lengthAdjust="spacingAndGlyphs">-2.19 V</text>
<rect x="509.7" y="158.3" width="8" height="8" fill="#f8f8f8" stroke="#6a6e78" stroke-width="0.6"/>
<path d="M511.2 161.9 l2.0 2.5 l3.2 -4.9" stroke="#0c0c0c" stroke-width="1.6" fill="none"/>
<text x="520.8" y="165.1" font-size="8.7" fill="#f6f6f6" font-weight="bold" stroke="#f6f6f6" stroke-width="0.25" textLength="38.2" lengthAdjust="spacingAndGlyphs">Amplitude</text>
<text x="616.6" y="165.1" font-size="8.7" fill="#0c0c0c" font-weight="bold" stroke="#0c0c0c" stroke-width="0.2" textLength="25.2" lengthAdjust="spacingAndGlyphs">5.06 V</text>
<rect x="509.7" y="170.6" width="8" height="8" fill="#f8f8f8" stroke="#6a6e78" stroke-width="0.6"/>
<path d="M511.2 174.2 l2.0 2.5 l3.2 -4.9" stroke="#0c0c0c" stroke-width="1.6" fill="none"/>
<text x="520.8" y="177.4" font-size="8.7" fill="#f6f6f6" font-weight="bold" stroke="#f6f6f6" stroke-width="0.25" textLength="31.5" lengthAdjust="spacingAndGlyphs">AC RMS</text>
<text x="616.6" y="177.4" font-size="8.7" fill="#0c0c0c" font-weight="bold" stroke="#0c0c0c" stroke-width="0.2" textLength="25.2" lengthAdjust="spacingAndGlyphs">1.46 V</text>
<rect x="509.7" y="182.9" width="8" height="8" fill="#f8f8f8" stroke="#6a6e78" stroke-width="0.6"/>
<path d="M511.2 186.5 l2.0 2.5 l3.2 -4.9" stroke="#0c0c0c" stroke-width="1.6" fill="none"/>
<text x="520.8" y="189.7" font-size="8.7" fill="#f6f6f6" font-weight="bold" stroke="#f6f6f6" stroke-width="0.25" textLength="29.5" lengthAdjust="spacingAndGlyphs">AC dBV</text>
<text x="616.6" y="189.7" font-size="8.7" fill="#0c0c0c" font-weight="bold" stroke="#0c0c0c" stroke-width="0.2" textLength="35.2" lengthAdjust="spacingAndGlyphs">3.30 dBV</text>
<rect x="509.7" y="195.3" width="8" height="8" fill="#f8f8f8" stroke="#6a6e78" stroke-width="0.6"/>
<path d="M511.2 198.9 l2.0 2.5 l3.2 -4.9" stroke="#0c0c0c" stroke-width="1.6" fill="none"/>
<text x="520.8" y="202.1" font-size="8.7" fill="#f6f6f6" font-weight="bold" stroke="#f6f6f6" stroke-width="0.25" textLength="30.4" lengthAdjust="spacingAndGlyphs">AC dBm</text>
<text x="616.6" y="202.1" font-size="8.7" fill="#0c0c0c" font-weight="bold" stroke="#0c0c0c" stroke-width="0.2" textLength="36.4" lengthAdjust="spacingAndGlyphs">5.52 dBm</text>
<rect x="509.7" y="207.6" width="8" height="8" fill="#f8f8f8" stroke="#6a6e78" stroke-width="0.6"/>
<path d="M511.2 211.2 l2.0 2.5 l3.2 -4.9" stroke="#0c0c0c" stroke-width="1.6" fill="none"/>
<text x="520.8" y="214.4" font-size="8.7" fill="#f6f6f6" font-weight="bold" stroke="#f6f6f6" stroke-width="0.25" textLength="48.4" lengthAdjust="spacingAndGlyphs">AC+DC RMS</text>
<text x="616.6" y="214.4" font-size="8.7" fill="#0c0c0c" font-weight="bold" stroke="#0c0c0c" stroke-width="0.2" textLength="24.8" lengthAdjust="spacingAndGlyphs">1.50 V</text>
<rect x="509.7" y="219.9" width="8" height="8" fill="#f8f8f8" stroke="#6a6e78" stroke-width="0.6"/>
<path d="M511.2 223.5 l2.0 2.5 l3.2 -4.9" stroke="#0c0c0c" stroke-width="1.6" fill="none"/>
<text x="520.8" y="226.7" font-size="8.7" fill="#f6f6f6" font-weight="bold" stroke="#f6f6f6" stroke-width="0.25" textLength="47.6" lengthAdjust="spacingAndGlyphs">AC+DC dBV</text>
<text x="616.6" y="226.7" font-size="8.7" fill="#0c0c0c" font-weight="bold" stroke="#0c0c0c" stroke-width="0.2" textLength="35.2" lengthAdjust="spacingAndGlyphs">3.50 dBV</text>
<rect x="509.7" y="232.3" width="8" height="8" fill="#f8f8f8" stroke="#6a6e78" stroke-width="0.6"/>
<path d="M511.2 235.9 l2.0 2.5 l3.2 -4.9" stroke="#0c0c0c" stroke-width="1.6" fill="none"/>
<text x="520.8" y="239.1" font-size="8.7" fill="#f6f6f6" font-weight="bold" stroke="#f6f6f6" stroke-width="0.25" textLength="47.6" lengthAdjust="spacingAndGlyphs">AC+DC dBm</text>
<text x="616.6" y="239.1" font-size="8.7" fill="#0c0c0c" font-weight="bold" stroke="#0c0c0c" stroke-width="0.2" textLength="36.4" lengthAdjust="spacingAndGlyphs">5.72 dBm</text>
<text x="508.2" y="251.8" font-size="8.7" fill="#ffffff" font-weight="bold" stroke="#ffffff" stroke-width="0.25" textLength="24.9" lengthAdjust="spacingAndGlyphs">Timing</text>
<rect x="509.7" y="256.9" width="8" height="8" fill="url(#gChk)" stroke="#5a5e68" stroke-width="0.6"/>
<text x="520.8" y="263.7" font-size="8.7" fill="#f6f6f6" font-weight="bold" stroke="#f6f6f6" stroke-width="0.25" textLength="42.1" lengthAdjust="spacingAndGlyphs">Duty Cycle</text>
<rect x="509.7" y="269.2" width="8" height="8" fill="url(#gChk)" stroke="#5a5e68" stroke-width="0.6"/>
<text x="520.8" y="276.1" font-size="8.7" fill="#f6f6f6" font-weight="bold" stroke="#f6f6f6" stroke-width="0.25" textLength="56.8" lengthAdjust="spacingAndGlyphs">Positive Width</text>
<rect x="509.7" y="281.6" width="8" height="8" fill="url(#gChk)" stroke="#5a5e68" stroke-width="0.6"/>
<text x="520.8" y="288.4" font-size="8.7" fill="#f6f6f6" font-weight="bold" stroke="#f6f6f6" stroke-width="0.25" textLength="61.0" lengthAdjust="spacingAndGlyphs">Negative Width</text>
<rect x="509.7" y="293.9" width="8" height="8" fill="url(#gChk)" stroke="#5a5e68" stroke-width="0.6"/>
<text x="520.8" y="300.7" font-size="8.7" fill="#f6f6f6" font-weight="bold" stroke="#f6f6f6" stroke-width="0.25" textLength="34.6" lengthAdjust="spacingAndGlyphs">Rise Time</text>
<rect x="509.7" y="306.2" width="8" height="8" fill="url(#gChk)" stroke="#5a5e68" stroke-width="0.6"/>
<text x="520.8" y="313.0" font-size="8.7" fill="#f6f6f6" font-weight="bold" stroke="#f6f6f6" stroke-width="0.25" textLength="35.4" lengthAdjust="spacingAndGlyphs">Fall Time</text>
<rect x="509.7" y="318.6" width="8" height="8" fill="url(#gChk)" stroke="#5a5e68" stroke-width="0.6"/>
<text x="520.8" y="325.4" font-size="8.7" fill="#f6f6f6" font-weight="bold" stroke="#f6f6f6" stroke-width="0.25" textLength="24.9" lengthAdjust="spacingAndGlyphs">Period</text>
<rect x="509.7" y="330.9" width="8" height="8" fill="url(#gChk)" stroke="#5a5e68" stroke-width="0.6"/>
<text x="520.8" y="337.7" font-size="8.7" fill="#f6f6f6" font-weight="bold" stroke="#f6f6f6" stroke-width="0.25" textLength="40.8" lengthAdjust="spacingAndGlyphs">Frequency</text>
<text x="513.8" y="359.3" font-size="9.4" fill="#dfe2e9" font-weight="bold" stroke="#dfe2e9" stroke-width="0.2" textLength="37.0" lengthAdjust="spacingAndGlyphs">Select All</text>
<text x="560.4" y="359.3" font-size="9.4" fill="#dfe2e9" font-weight="bold" stroke="#dfe2e9" stroke-width="0.2" textLength="47.8" lengthAdjust="spacingAndGlyphs">Unselect All</text>
<text x="651.4" y="359.3" font-size="9.4" fill="#dfe2e9" font-weight="bold" stroke="#dfe2e9" stroke-width="0.2" textLength="20.1" lengthAdjust="spacingAndGlyphs">Close</text>
<rect x="509.5" y="369.8" width="8" height="8" fill="url(#gChk)" stroke="#5a5e68" stroke-width="0.6"/>
<text x="520.6" y="377.4" font-size="9.4" fill="#dfe2e9" font-weight="bold" stroke="#dfe2e9" stroke-width="0.2" textLength="63.7" lengthAdjust="spacingAndGlyphs">Show on Screen</text>
<text x="652.6" y="378.3" font-size="9.4" fill="#dfe2e9" font-weight="bold" stroke="#dfe2e9" stroke-width="0.2" textLength="17.6" lengthAdjust="spacingAndGlyphs">Help</text>
</g>
</svg>
</body></html>
